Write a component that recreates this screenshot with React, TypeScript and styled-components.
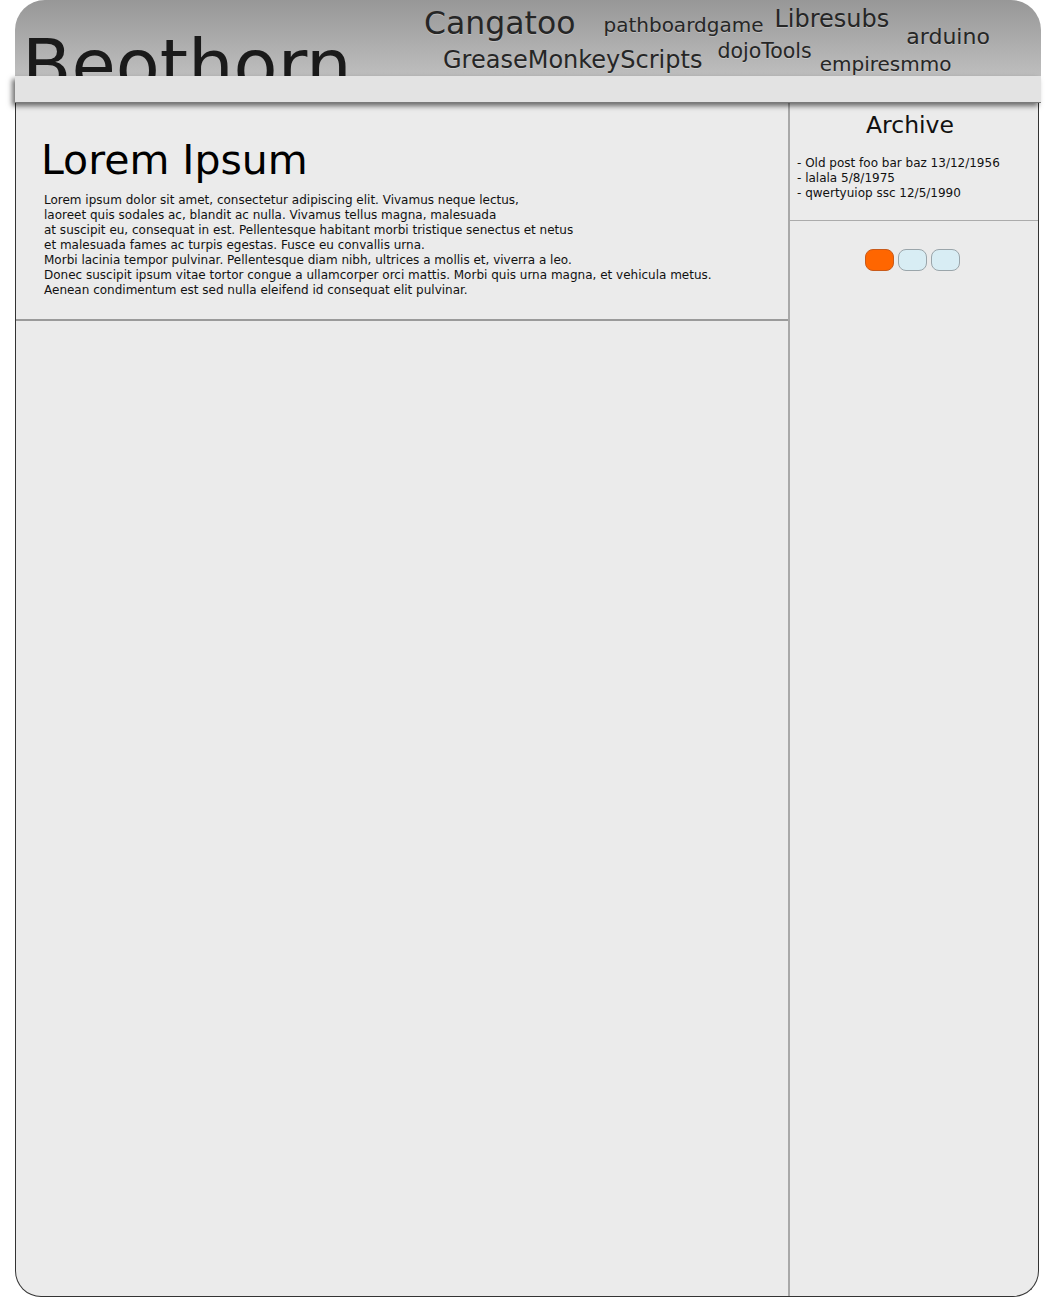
import React from "react";
import styled, { createGlobalStyle } from "styled-components";

const GlobalStyle = createGlobalStyle`
	body {
		margin: 0;
		background: #ffffff;
		font-family: "DejaVu Sans", Verdana, sans-serif;
	}
`;

const Page = styled.div`
	padding-left: 15px;
	width: 1026px;
`;

const Header = styled.header`
	display: grid;
	grid-template-columns: 409px 1fr;
	height: 76px;
	overflow: hidden;
	border-radius: 30px 30px 0 0;
	background: linear-gradient(#979797, #bebebe);
`;

const Logo = styled.div`
	padding: 29px 0 0 7px;
	font-size: 72px;
	line-height: 1;
	color: #1a1a1a;
	white-space: nowrap;
`;

const TagCloud = styled.nav`
	display: flex;
	flex-direction: column;
`;

const TagRow = styled.div<{ $indent: number }>`
	display: flex;
	align-items: flex-start;
	height: 40px;
	padding-left: ${(p) => p.$indent}px;
`;

const Tag = styled.a<{ $size: number; $top: number; $gap: number }>`
	font-size: ${(p) => p.$size}px;
	line-height: 1;
	margin-top: ${(p) => p.$top}px;
	margin-left: ${(p) => p.$gap}px;
	color: #262626;
	text-shadow: 0 1px 0 rgba(255, 255, 255, 0.25);
	white-space: nowrap;
	text-decoration: none;
`;

const MenuBar = styled.div`
	height: 26px;
	background: #e3e3e3;
	border-bottom: 1px solid #7a7a7a;
	box-shadow: -3px 3px 5px rgba(0, 0, 0, 0.55);
	position: relative;
`;

const Main = styled.main`
	display: grid;
	grid-template-columns: 774px 1fr;
	width: 1022px;
	height: 1193px;
	border: 1px solid #333;
	border-top: none;
	border-radius: 0 0 26px 26px;
	background: #ebebeb;
`;

const Content = styled.section`
	border-right: 2px solid #a8a8a8;
`;

const Post = styled.article`
	padding: 37px 0 21px 25px;
	border-bottom: 2px solid #9a9a9a;
`;

const PostTitle = styled.h1`
	margin: 0;
	font-size: 41px;
	font-weight: normal;
	line-height: 1;
	color: #000;
`;

const PostBody = styled.p`
	margin: 12px 0 0 3px;
	font-size: 12px;
	line-height: 15px;
	color: #111;
`;

const Sidebar = styled.aside`
	display: flex;
	flex-direction: column;
`;

const Archive = styled.div`
	padding: 11px 0 19px 7px;
	border-bottom: 1px solid #ababab;
`;

const ArchiveTitle = styled.h2`
	margin: 0 0 18px -7px;
	text-align: center;
	font-size: 23.5px;
	font-weight: normal;
	line-height: 1;
	color: #111;
	padding-right: 8px;
`;

const ArchiveItem = styled.div`
	font-size: 12px;
	line-height: 15px;
	color: #111;
`;

const Pager = styled.div`
	display: flex;
	justify-content: center;
	gap: 4px;
	padding: 28px 0 0 0;
	margin-left: -3px;
`;

const PageDot = styled.button<{ $active?: boolean }>`
	width: 29px;
	height: 22px;
	padding: 0;
	border-radius: 8px;
	border: 1px solid ${(p) => (p.$active ? "#c85a1a" : "#9aa5aa")};
	background: ${(p) => (p.$active ? "#ff6600" : "#d8edf4")};
`;

const posts = [
	"Lorem ipsum dolor sit amet, consectetur adipiscing elit. Vivamus neque lectus,",
	"laoreet quis sodales ac, blandit ac nulla. Vivamus tellus magna, malesuada",
	"at suscipit eu, consequat in est. Pellentesque habitant morbi tristique senectus et netus",
	"et malesuada fames ac turpis egestas. Fusce eu convallis urna.",
	"Morbi lacinia tempor pulvinar. Pellentesque diam nibh, ultrices a mollis et, viverra a leo.",
	"Donec suscipit ipsum vitae tortor congue a ullamcorper orci mattis. Morbi quis urna magna, et vehicula metus.",
	"Aenean condimentum est sed nulla eleifend id consequat elit pulvinar.",
];

const archive = [
	"- Old post foo bar baz 13/12/1956",
	"- lalala 5/8/1975",
	"- qwertyuiop ssc 12/5/1990",
];

const App = () => {
	return (
		<Page>
			<GlobalStyle />
			<Header>
				<Logo>Beothorn</Logo>
				<TagCloud>
					<TagRow $indent={0}>
						<Tag $size={31.5} $top={8} $gap={0}>Cangatoo</Tag>
						<Tag $size={20} $top={15} $gap={28}>pathboardgame</Tag>
						<Tag $size={24} $top={7} $gap={11}>Libresubs</Tag>
						<Tag $size={22} $top={26} $gap={17}>arduino</Tag>
					</TagRow>
					<TagRow $indent={19}>
						<Tag $size={24} $top={8} $gap={0}>GreaseMonkeyScripts</Tag>
						<Tag $size={20.5} $top={1} $gap={15}>dojoTools</Tag>
						<Tag $size={20} $top={14} $gap={8}>empiresmmo</Tag>
					</TagRow>
				</TagCloud>
			</Header>
			<MenuBar />
			<Main>
				<Content>
					<Post>
						<PostTitle>Lorem Ipsum</PostTitle>
						<PostBody>
							{posts.map((line, i) => (
								<React.Fragment key={i}>
									{line}
									<br />
								</React.Fragment>
							))}
						</PostBody>
					</Post>
				</Content>
				<Sidebar>
					<Archive>
						<ArchiveTitle>Archive</ArchiveTitle>
						{archive.map((item) => (
							<ArchiveItem key={item}>{item}</ArchiveItem>
						))}
					</Archive>
					<Pager>
						<PageDot $active />
						<PageDot />
						<PageDot />
					</Pager>
				</Sidebar>
			</Main>
		</Page>
	);
};

export default App;
